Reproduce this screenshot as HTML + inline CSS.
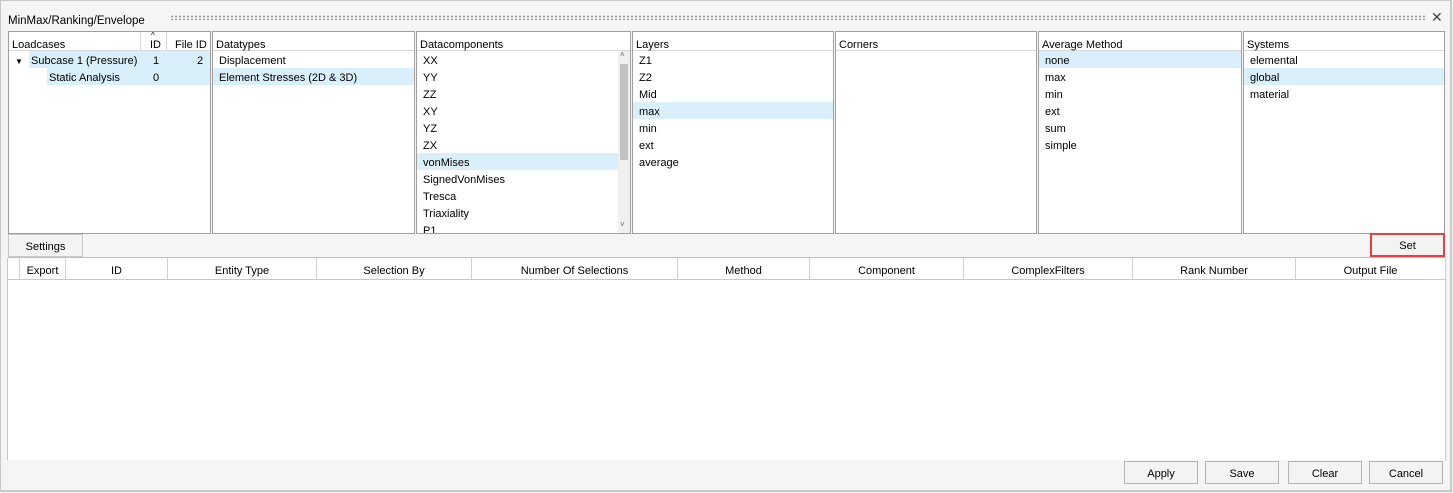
<!DOCTYPE html>
<html><head><style>
*{box-sizing:border-box;margin:0;padding:0}
body{width:1453px;height:493px;background:#f5f5f5;font-family:"Liberation Sans",sans-serif;font-size:11px;color:#000;position:relative;overflow:hidden}
.a{position:absolute}
.frame{left:0;top:0;width:1452px;height:492px;border:1px solid #c8c8c8;border-right:2px solid #c8c8c8;border-bottom:2px solid #c8c8c8}
.panel{position:absolute;top:31px;height:203px;background:#fff;border:1px solid #a0a0a0;overflow:hidden}
.hd{height:19px;border-bottom:1px solid #d8d8d8;padding:7px 0 0 3px;line-height:12px;white-space:nowrap}
.row{height:17px;line-height:21px;padding-left:6px;white-space:nowrap}
.sel{background:#d9f0fa}
.btn{position:absolute;border:1px solid #b4b4b4;background:#f3f3f3;text-align:center;line-height:25px;height:23px}
.gh{position:absolute;top:258px;height:22px;line-height:27px;text-align:center;border-right:1px solid #d0d0d0;border-bottom:1px solid #c8c8c8;background:#fff}
</style></head><body>
<div class="a frame"></div>
<div class="a" style="left:8px;top:11px;font-size:11.5px;line-height:16px;padding-top:2px">MinMax/Ranking/Envelope</div>
<div class="a" style="left:170px;top:15px;width:1255px;height:5px;background-image:radial-gradient(circle,#9a9a9a 0.9px,transparent 1.1px);background-size:4px 3px"></div>
<div class="a" style="left:1431px;top:9px;font-size:14px;color:#444">✕</div>

<div class="panel" style="left:8px;width:203px">
 <div class="hd" style="position:relative">Loadcases<span class="a" style="left:131px;top:0;height:19px;border-left:1px solid #d8d8d8"></span><span class="a" style="left:141px;top:7px">ID</span><span class="a" style="left:142px;top:-2px;font-size:8px">^</span><span class="a" style="left:157px;top:0;height:19px;border-left:1px solid #d8d8d8"></span><span class="a" style="left:166px;top:7px">File ID</span></div>
 <div class="row" style="position:relative;padding:0"><span class="a" style="left:6px;top:0;font-size:8px">▼</span><span class="a sel" style="left:20px;width:183px;height:17px;padding-left:2px">Subcase 1 (Pressure)</span><span class="a" style="left:144px">1</span><span class="a" style="left:188px">2</span></div>
 <div class="row" style="position:relative;padding:0"><span class="a sel" style="left:38px;width:165px;height:17px;padding-left:2px">Static Analysis</span><span class="a" style="left:144px">0</span></div>
</div>
<div class="panel" style="left:212px;width:203px"><div class="hd">Datatypes</div><div class="row">Displacement</div><div class="row sel">Element Stresses (2D &amp; 3D)</div></div>
<div class="panel" style="left:416px;width:215px"><div class="hd">Datacomponents</div>
 <div class="row">XX</div><div class="row">YY</div><div class="row">ZZ</div><div class="row">XY</div><div class="row">YZ</div><div class="row">ZX</div><div class="row sel" style="width:201px">vonMises</div><div class="row">SignedVonMises</div><div class="row">Tresca</div><div class="row">Triaxiality</div><div class="row">P1</div>
 <div class="a" style="left:201px;top:19px;width:12px;height:183px;background:#f0f0f0"></div>
 <div class="a" style="left:203px;top:32px;width:8px;height:96px;background:#c2c2c2"></div>
 <div class="a" style="left:203px;top:18px;font-size:8px;color:#666">˄</div>
 <div class="a" style="left:203px;top:188px;font-size:8px;color:#666">˅</div>
</div>
<div class="panel" style="left:632px;width:202px"><div class="hd">Layers</div><div class="row">Z1</div><div class="row">Z2</div><div class="row">Mid</div><div class="row sel">max</div><div class="row">min</div><div class="row">ext</div><div class="row">average</div></div>
<div class="panel" style="left:835px;width:202px"><div class="hd">Corners</div></div>
<div class="panel" style="left:1038px;width:204px"><div class="hd">Average Method</div><div class="row sel">none</div><div class="row">max</div><div class="row">min</div><div class="row">ext</div><div class="row">sum</div><div class="row">simple</div></div>
<div class="panel" style="left:1243px;width:202px"><div class="hd">Systems</div><div class="row">elemental</div><div class="row sel">global</div><div class="row">material</div></div>

<div class="btn" style="left:8px;top:234px;width:75px;height:23px;background:#f3f3f3;border-color:#c8c8c8">Settings</div>
<div class="a" style="left:8px;top:257px;width:1438px;height:1px;background:#c0c0c0"></div>
<div class="btn" style="left:1370px;top:233px;width:75px;height:24px;border:2px solid #e84040;background:#f3f3f3;line-height:23px">Set</div>

<div class="a" style="left:8px;top:258px;width:1438px;height:202px;background:#fff;border-right:1px solid #c8c8c8"></div>
<div class="gh" style="left:8px;width:12px"></div>
<div class="gh" style="left:20px;width:46px">Export</div>
<div class="gh" style="left:66px;width:102px">ID</div>
<div class="gh" style="left:168px;width:149px">Entity Type</div>
<div class="gh" style="left:317px;width:155px">Selection By</div>
<div class="gh" style="left:472px;width:206px">Number Of Selections</div>
<div class="gh" style="left:678px;width:132px">Method</div>
<div class="gh" style="left:810px;width:154px">Component</div>
<div class="gh" style="left:964px;width:169px">ComplexFilters</div>
<div class="gh" style="left:1133px;width:163px">Rank Number</div>
<div class="gh" style="left:1296px;width:150px">Output File</div>
<div class="a" style="left:7px;top:258px;width:1px;height:202px;background:#c8c8c8"></div>

<div class="btn" style="left:1124px;top:461px;width:74px">Apply</div>
<div class="btn" style="left:1205px;top:461px;width:74px">Save</div>
<div class="btn" style="left:1288px;top:461px;width:74px">Clear</div>
<div class="btn" style="left:1369px;top:461px;width:74px">Cancel</div>
</body></html>
